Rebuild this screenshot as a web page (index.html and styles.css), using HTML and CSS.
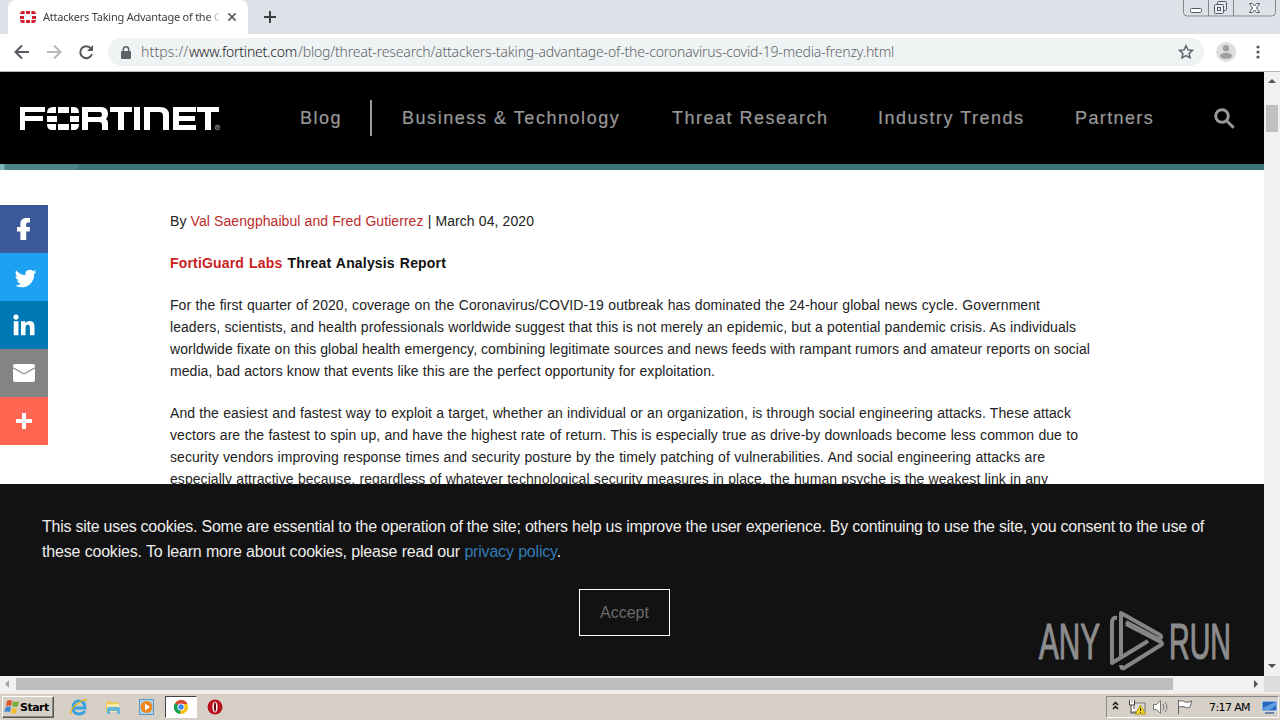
FILE: index.html
```html
<!DOCTYPE html>
<html lang="en"><head><meta charset="utf-8"><title>Fortinet</title><link rel="stylesheet" href="styles.css"></head>
<body>
<div class="screen">
<div class="tabstrip">
 <div class="tab-edge"></div>
 <div class="tab">
  <svg class="fav" width="16" height="12" viewBox="0 0 16 12" fill="#d8202c"><path d="M6 0h4v3H6zM6 9h4v3H6zM0 5h4v3H0zM12 5h4v3h-4zM4.6 0v3H0Q0 0 3 0zM11.4 0v3H16Q16 0 13 0zM4.6 12V9H0q0 3 3 3zM11.4 12V9H16q0 3-3 3z"/></svg>
  <span class="tab-title">Attackers Taking Advantage of the C</span>
  <svg class="tab-x" width="10" height="10" viewBox="0 0 10 10" stroke="#5f6368" stroke-width="1.8"><path d="M1.4 1.4l7.2 7.2M8.6 1.4L1.4 8.6"/></svg>
 </div>
 <svg class="newtab" width="12" height="12" viewBox="0 0 12 12" stroke="#3c4043" stroke-width="2"><path d="M6 0v12M0 6h12"/></svg>
 <svg class="winbtns" width="94" height="18" viewBox="0 0 94 18" fill="none" stroke="#85888d"><path d="M.5 0v12.500q0 3.500 3.500 3.500h85q3.500 0 3.500-3.500V0M25.500 0v16M50.500 0v16"/><g stroke="#555b66"><rect x="7.500" y="8.500" width="11" height="4" rx="1" fill="#fff"/><rect x="34.500" y="1.500" width="9" height="9" rx="1"/><rect x="31.500" y="4.500" width="9" height="9" rx="1" fill="#e8eaee"/><rect x="34.500" y="7.500" width="3" height="3"/><path d="M66.500 3.500h3l2 2.500 2-2.500h3l-3 4.500 3 4.500h-3l-2-2.500-2 2.500h-3l3-4.500z" fill="#fff"/></g></svg>
</div>
<div class="toolbar">
 <svg class="nav" width="96" height="20" viewBox="0 0 96 20" fill="none" stroke="#55585c" stroke-width="2"><path d="M22 10H9M15 3.500L8.500 10l6.500 6.500"/><path d="M40 10h13M47 3.500l6.500 6.500-6.500 6.500" stroke="#b6b8ba"/><path d="M84 6.500A6 6 0 1 0 85 12"/><path d="M86 3v6h-6z" fill="#55585c" stroke="none"/></svg>
 <div class="omnibox">
  <svg width="10" height="13" viewBox="0 0 10 13"><path d="M2.300 6V3.500a2.700 2.700 0 0 1 5.400 0V6" fill="none" stroke="#5f6368" stroke-width="1.500"/><rect y="5" width="10" height="8" rx="1" fill="#5f6368"/></svg>
  <div class="url"><span class="u1">https://</span><span class="u2">www.fortinet.com</span><span class="u3">/blog/threat-research/attackers-taking-advantage-of-the-coronavirus-covid-19-media-frenzy.html</span></div>
  <svg class="star" width="16" height="16" viewBox="0 0 16 16" fill="none" stroke="#5f6368" stroke-width="1.500"><path d="M8 1.800l1.900 4.100 4.500.5-3.300 3 .9 4.500L8 11.600l-4 2.300.9-4.500-3.300-3 4.500-.5z"/></svg>
 </div>
 <svg class="avatar" width="20" height="20" viewBox="0 0 20 20"><circle cx="10" cy="10" r="10" fill="#dedede"/><circle cx="10" cy="6.200" r="3.200" fill="#a0a0a0"/><ellipse cx="10" cy="13.800" rx="6" ry="3" fill="#a0a0a0"/></svg>
 <svg class="dots" width="4" height="14" viewBox="0 0 4 14" fill="#55585c"><circle cx="2" cy="2" r="1.600"/><circle cx="2" cy="7" r="1.600"/><circle cx="2" cy="12" r="1.600"/></svg>
</div>
<div class="viewport">
 <main class="page">
  <header class="site-head">
   <svg class="logo" width="202" height="24" viewBox="0 0 202 24" fill="#fff"><path d="M0 0h25v5H5v4h18v5H5v9H0zM38 0h11v6H38zM38 17h11v6H38zM27 9h10v6H27zM50 9h9v6h-9zM36 0v6h-9q0-6 6-6zM51 0v6h8q0-6-5-6zM36 23v-6h-9q0 6 5 6zM51 23v-6h8q0 6-5 6z"/><path fill-rule="evenodd" d="M62 0h19q7 0 7 7 0 3-2 5 2 1 2 4v7h-6v-5q0-3-3-3H68v8h-6zM68 5v5h12q2 0 2-2.500T80 5z"/><path d="M90 0h22v5h-8v18h-6V5h-8zM114 0h6v23h-6zM124 0h16q9 0 9 8v15h-6V9q0-4-4-4h-9v18h-6zM153 0h23v5h-17v4h16v5h-16v4h17v5h-23zM177 0h22v5h-8v18h-6V5h-8z"/><circle cx="197.500" cy="20.500" r="2.300" fill="none" stroke="#aaa" stroke-width=".7"/><path d="M196.800 22v-3h1.500v1.500h-1.500l1.600 1.500" fill="none" stroke="#aaa" stroke-width=".5"/></svg>
   <nav class="menu"><a class="m1">Blog</a><i class="bar"></i><a class="m2">Business &amp; Technology</a><a class="m3">Threat Research</a><a class="m4">Industry Trends</a><a class="m5">Partners</a></nav>
   <svg class="search" width="21" height="21" viewBox="0 0 21 21" fill="none" stroke="#999" stroke-width="3"><circle cx="8" cy="8" r="6.300"/><path d="M12.700 12.700l7 7"/></svg>
  </header>
  <div class="hero-edge"></div>
  <article class="post">
   <p class="by"><span class="ln w-by">By <a>Val Saengphaibul and Fred Gutierrez</a> | March 04, 2020</span></p>
   <p class="title"><span class="ln w-title"><a>FortiGuard Labs</a> Threat Analysis Report</span></p>
   <p><span class="ln w1">For the first quarter of 2020, coverage on the Coronavirus/COVID-19 outbreak has dominated the 24-hour global news cycle. Government</span>
   <span class="ln w2">leaders, scientists, and health professionals worldwide suggest that this is not merely an epidemic, but a potential pandemic crisis. As individuals</span>
   <span class="ln w3">worldwide fixate on this global health emergency, combining legitimate sources and news feeds with rampant rumors and amateur reports on social</span>
   <span class="ln w4">media, bad actors know that events like this are the perfect opportunity for exploitation.</span></p>
   <p><span class="ln w5">And the easiest and fastest way to exploit a target, whether an individual or an organization, is through social engineering attacks. These attack</span>
   <span class="ln w6">vectors are the fastest to spin up, and have the highest rate of return. This is especially true as drive-by downloads become less common due to</span>
   <span class="ln w7">security vendors improving response times and security posture by the timely patching of vulnerabilities. And social engineering attacks are</span>
   <span class="ln w8">especially attractive because, regardless of whatever technological security measures in place, the human psyche is the weakest link in any</span></p>
  </article>
  <aside class="share">
   <a class="fb"><svg viewBox="0 0 32 32"><path d="M22 5h-3.500c-4.300 0-6.100 2.300-6.100 5.700v3.200H9v4.700h3.400V27h5.800v-8.400h3.400l.4-4.700h-3.800v-2.300c0-1.400.6-2 2-2H22z"/></svg></a>
   <a class="tw"><svg viewBox="0 0 32 32"><path d="M28 8.557a9.913 9.913 0 0 1-2.828.775 4.930 4.930 0 0 0 2.166-2.725 9.738 9.738 0 0 1-3.130 1.194 4.920 4.920 0 0 0-3.593-1.550 4.924 4.924 0 0 0-4.794 6.049c-4.090-.21-7.720-2.170-10.150-5.150a4.942 4.942 0 0 0-.665 2.477c0 1.710.87 3.214 2.190 4.100a4.968 4.968 0 0 1-2.230-.616v.06c0 2.390 1.700 4.380 3.952 4.830-.414.115-.85.174-1.297.174-.318 0-.626-.030-.928-.086a4.935 4.935 0 0 0 4.600 3.420 9.893 9.893 0 0 1-6.114 2.107c-.398 0-.790-.023-1.175-.068a13.953 13.953 0 0 0 7.550 2.213c9.056 0 14.010-7.507 14.010-14.013 0-.213-.005-.426-.015-.637.960-.695 1.795-1.560 2.455-2.550z"/></svg></a>
   <a class="li"><svg viewBox="0 0 32 32"><path d="M5.700 12.200h4.700v14H5.700zm2.300-6.700a2.600 2.600 0 1 1 0 5.200 2.600 2.600 0 0 1 0-5.200M13 12.200h4.400v1.900h.1c.6-1.100 2-2.200 4-2.200 4.200 0 5 2.780 5 6.400v7.900h-4.600v-7c0-1.570 0-3.400-2.050-3.400-2 0-2.330 1.600-2.330 3.300v7.100H13z"/></svg></a>
   <a class="em"><svg viewBox="0 0 32 32"><path d="M7 7h18q2 0 2 1.500v1.700l-11 6-11-6V8.500Q5 7 7 7zM5 11.500l11 6 11-6V23q0 2-2 2H7q-2 0-2-2z"/></svg></a>
   <a class="pl"><svg viewBox="0 0 32 32"><path d="M14 8h4v6h6v4h-6v6h-4v-6H8v-4h6z"/></svg></a>
  </aside>
  <section class="cookies">
   <p><span class="ln c1">This site uses cookies. Some are essential to the operation of the site; others help us improve the user experience. By continuing to use the site, you consent to the use of</span><span class="ln c2">these cookies. To learn more about cookies, please read our <a>privacy policy</a>.</span></p>
   <button class="accept">Accept</button>
  </section>
 </main>
 <div class="vscroll"><svg width="8" height="5" viewBox="0 0 8 5"><path d="M4 0l4 4H0z" fill="#505050"/></svg><i class="vthumb"></i><svg class="down" width="8" height="5" viewBox="0 0 8 5"><path d="M0 0h8L4 4z" fill="#505050"/></svg></div>
 <div class="hscroll"><svg width="5" height="8" viewBox="0 0 5 8"><path d="M4 0v8L0 4z" fill="#a3a3a3"/></svg><i class="hthumb"></i><svg class="right" width="5" height="8" viewBox="0 0 5 8"><path d="M0 0v8l4-4z" fill="#505050"/></svg></div>
 <i class="corner"></i>
 <svg class="watermark" width="200" height="64" viewBox="0 0 200 64" fill="none"><g fill="#8d8d8d" stroke="#8d8d8d" stroke-width="1.200"><text class="wm" x="1" y="49" textLength="61" lengthAdjust="spacingAndGlyphs">ANY</text><text class="wm" x="131" y="49" textLength="62" lengthAdjust="spacingAndGlyphs">RUN</text></g><g stroke="#858585" stroke-width="4" stroke-linejoin="round"><path d="M79 8q-5-1-5 5v40l36-22"/><path d="M83 46V3l39 22q3 3-2 4L88 12"/><path d="M88 14l35 18q2 2 0 3L86 58q-3 1-3-3"/></g></svg>
</div>
<footer class="taskbar">
 <button class="start"><svg width="16" height="16" viewBox="0 0 16 16"><path d="M3 2q3-2 5 0L7 7Q4 6 2 7z" fill="#e2572b"/><path d="M9 2q3 2 6 0l-1 5q-3 2-6 0z" fill="#74ad3b"/><path d="M2 8q3-1 5 0l-1 5q-3-1-6 0z" fill="#4586d1"/><path d="M8 9q3 1 5 0l-1 5q-3 1-5 0z" fill="#f3bd27"/></svg>Start</button>
 <div class="quick">
  <svg width="20" height="20" viewBox="0 0 20 20" fill="none"><path d="M16 14q-2 3-6 3-6 0-6-6.500T10 4q6 0 6 7H5" stroke="#36a2e2" stroke-width="2.800"/><path d="M2 17Q0 14 7 8T18 3" stroke="#e3b52d" stroke-width="1.500"/></svg>
  <svg width="20" height="20" viewBox="0 0 20 20"><path d="M3 4h5l1 1h7v10H3z" fill="#e8ca65"/><path d="M4 7h12v8H4z" fill="#f7e9a7"/><path d="M4 17v-5q0-2 2-2h9q2 0 2 2v5h-3v-3H7v3z" fill="#63b6db"/></svg>
  <svg width="20" height="20" viewBox="0 0 20 20"><rect x="2.500" y="2.500" width="14" height="15" fill="#a8d3f2" stroke="#6297c5"/><circle cx="9.500" cy="10" r="6" fill="#f1841b"/><path d="M8 6.500l5 3.500-5 3.500z" fill="#fff"/></svg>
  <span class="active"><svg width="16" height="16" viewBox="0 0 16 16"><circle cx="8" cy="8" r="7" fill="#f4c20d"/><path d="M8 8L2 4.500A7 7 0 0 1 14.500 5H8z" fill="#db4437"/><path d="M8 8l-1 7A7 7 0 0 1 2 4.300z" fill="#0f9d58"/><circle cx="8" cy="8" r="3.600" fill="#fff"/><circle cx="8" cy="8" r="2.700" fill="#4285f4"/></svg></span>
  <svg width="20" height="20" viewBox="0 0 20 20"><circle cx="10" cy="10" r="7.500" fill="#b90f1b"/><ellipse cx="10" cy="10" rx="2.600" ry="5.500" fill="#fff"/><ellipse cx="10" cy="10" rx="1.100" ry="4.800" fill="#650810"/></svg>
 </div>
 <div class="tray">
  <svg width="100" height="20" viewBox="0 0 100 20" fill="none"><path d="M6 8l2.500-2.500L11 8M6 12l2.500-2.500L11 12" stroke="#111" stroke-width="1.500"/><path d="M27 6h11v9H27z" fill="#ddd" stroke="#777"/><path d="M23 3v4h4V3M25 7v6h3" stroke="#fff" stroke-width="2"/><path d="M22.500 3v5h5V3M24 8v8h9" stroke="#444"/><path d="M33.500 8l5 9h-10z" fill="#f5d629" stroke="#bb9b00"/><path d="M33.500 11v3m0 1v1" stroke="#222"/><path d="M46.500 7.500h3l4-4v13l-4-4h-3z" fill="#fff" stroke="#777"/><path d="M56 7q2 3 0 6M58 5q4 5 0 10" stroke="#777"/><path d="M71.500 3v14M72 4q4-1 6 1 3 1 7-1l-2 6q-3 2-5 0-3-1-6 0" fill="#fff" stroke="#666"/></svg>
  <span class="clock">7:17 AM</span>
  <svg class="desk" width="17" height="15" viewBox="0 0 17 15"><path d="M1 1h15v10H1z" fill="#2565bd" stroke="#dce8f4"/><path d="M1.500 8L15 1.500v4L8 10.500H1.500z" fill="#5f9ce0"/><path d="M4 13h9" stroke="#6c88a8" stroke-width="2"/></svg>
 </div>
</footer>
</div>
</body></html>
```
FILE: styles.css
```css
*{box-sizing:border-box}
body{margin:0;font-family:"Liberation Sans",Arial,sans-serif}
svg{display:block;flex:none}
.screen{width:1280px;height:720px;overflow:hidden;display:flex;flex-direction:column;background:#fff}
.tabstrip{height:34px;flex:none;background:#dee1e8;display:flex;align-items:flex-start}
.tab-edge{width:8px;height:34px;background:#dee1e8}
.tab{width:240px;height:34px;background:#fff;border-radius:8px 8px 0 0;display:flex;align-items:center;padding-left:12px}
.tab-title{font:11px "Noto Sans",sans-serif;color:#3c4043;width:178px;margin:-2px 0 0 7px;white-space:nowrap;letter-spacing:-.24px;-webkit-mask-image:linear-gradient(90deg,#000 92%,transparent)}
.tab-x{margin-left:6px}
.newtab{margin:11px 0 0 16px}
.winbtns{margin-left:auto;margin-right:3px}
.toolbar{height:38px;flex:none;border-bottom:1px solid #b5b7b9;display:flex;align-items:center;padding:0 0 1px 7px}
.nav{margin-right:5px}
.omnibox{width:1096px;height:28px;border-radius:14px;background:#f0f3f4;display:flex;align-items:center;padding:0 10px 0 13px}
.url{margin:-2px 0 0 10px;display:flex;font:300 14px "Noto Sans",sans-serif;white-space:nowrap;color:#5f6368}
.u1{width:48px;letter-spacing:.15px}
.u2{width:109px;letter-spacing:-.22px;color:#202124}
.u3{letter-spacing:-.165px}
.star{margin-left:auto}
.avatar{margin-left:12px}
.dots{margin-left:20px}
.viewport{flex:none;height:620px;display:grid;grid-template:604px 16px/1264px 16px;position:relative}
.page{position:relative;overflow:hidden;background:#fff}
.site-head{height:92px;background:#000;display:flex;align-items:center;padding:0 29px 0 20px}
.logo{margin-top:2px}
.menu{display:flex;align-items:center;font-size:18px;color:#999;height:92px;padding-left:78px;white-space:nowrap}
.menu a{letter-spacing:1.500px;-webkit-text-stroke:.2px #999}
.m1{width:70px}.bar{width:2px;height:36px;background:#999;margin-right:30px}
.menu .m2{width:270px;letter-spacing:1.550px}.m3{width:206px}.m4{width:197px}
.menu .m5{letter-spacing:1.380px}
.search{margin-left:auto}
.hero-edge{height:6px;background:linear-gradient(90deg,#7db5b8 0 4px,#4c8488 5px 76px,#3b7378 80px)}
.post{padding:40px 0 0 170px;font-size:14px;line-height:22px;color:#222}
.post p{margin:0 0 20px}
.post a{color:#bd2c2b}
.ln{display:block;white-space:nowrap;text-align-last:justify;letter-spacing:.06px}
.title{font-weight:700;color:#111}.title .ln{letter-spacing:.17px}.post .title a{color:#c9211e}
.w-by{width:364px}.w-title{width:276px}
.w1{width:870px}.w2{width:906px}.w3{width:920px}.w4{width:545px}.w5{width:901px}.w6{width:908px}.w7{width:875px}.w8{width:878px}
.share{position:absolute;left:0;top:133px;width:48px}
.share a{display:flex;width:48px;height:48px;align-items:center;justify-content:center}
.share svg{width:32px;height:32px;fill:#fff}
.share .tw svg{width:29px;height:29px;margin:2px 0 0 2px}
.fb{background:#3b5998}.tw{background:#1da1f2}.li{background:#0077b5}.em{background:#848484}.pl{background:#ff6550}
.cookies{position:absolute;left:0;right:0;bottom:0;height:192px;background:#121212;color:#eee;padding:30px 0 0 42px;font-size:16px;line-height:25px}
.cookies p{margin:0}.cookies a{color:#337ab7}
.cookies .ln{letter-spacing:-.19px}
.cookies .c1{width:1162px;letter-spacing:-.25px}.c2{width:519px}
.accept{display:block;width:91px;height:47px;margin:25px 0 0 537px;padding:0;border:1px solid #fff;background:none;color:#6c6c6c;font:16px "Liberation Sans",sans-serif}
.vscroll{background:#f1f1f1;display:flex;flex-direction:column;align-items:center;padding:7px 0}
.vthumb{width:12px;height:27px;background:#c1c1c1;margin-top:21px}
.down{margin-top:auto}
.hscroll{background:#f1f1f1;display:flex;align-items:center;padding:0 5px}
.hthumb{width:1157px;height:12px;background:#bdbdbd;margin-left:6px}
.right{margin-left:auto}
.corner{background:#dcdcdc}
.watermark{position:absolute;left:1038px;top:538px;overflow:visible}
.wm{font:50px "Liberation Sans",sans-serif}
.taskbar{flex:1;background:#d5cfc6;border-top:2px solid #f2eee8;display:flex;align-items:center;padding-left:2px}
.start{width:52px;height:22px;padding:0 0 0 1px;display:flex;align-items:center;gap:0;background:#d5cfc6;border:1px solid;border-color:#fff #555 #555 #fff;box-shadow:inset -1px -1px #888;font:700 11px "DejaVu Sans",sans-serif;letter-spacing:-.5px}
.quick{display:flex;align-items:center;margin-left:15px;gap:14px}
.active{width:32px;height:22px;margin:0 -6px;border:1px solid;border-color:#444 #fff #fff #444;background:#fff;display:flex;align-items:center;justify-content:center}
.tray{margin:0 1px 0 auto;width:173px;height:22px;border:1px solid;border-color:#888 #fff #fff #888;display:flex;align-items:center}
.clock{font:11px "DejaVu Sans",sans-serif;letter-spacing:-.6px;margin-left:2px;white-space:nowrap}
.desk{margin-left:auto}
```
